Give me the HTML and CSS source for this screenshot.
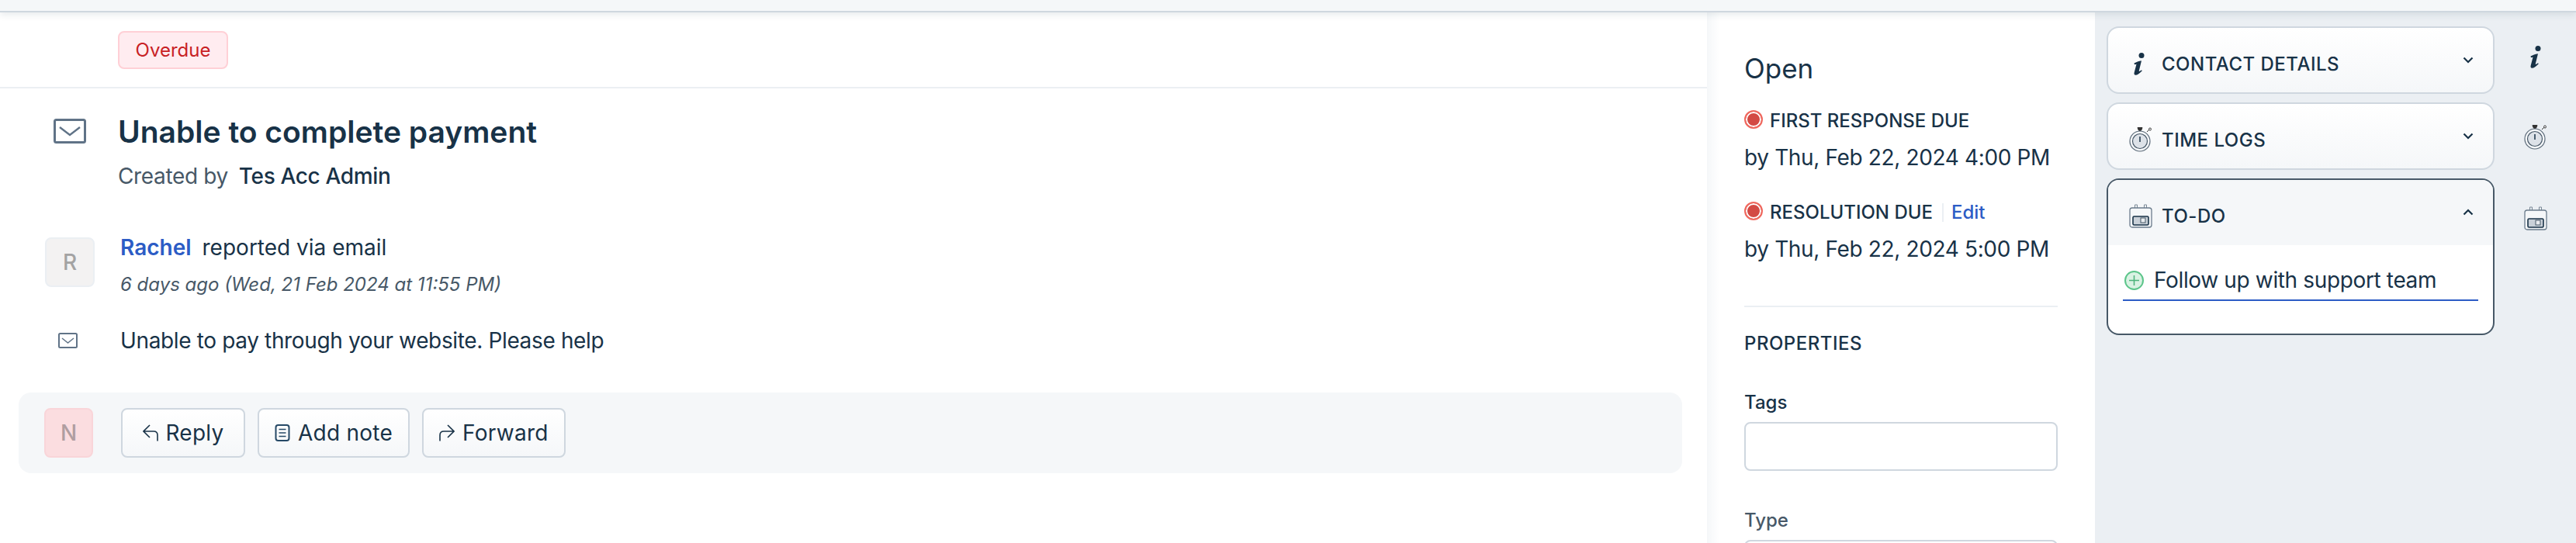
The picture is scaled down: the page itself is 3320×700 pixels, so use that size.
FILE: index.html
```html
<!DOCTYPE html>
<html lang="en">
<head>
<meta charset="utf-8">
<title>Unable to complete payment</title>
<link rel="stylesheet" href="styles.css">
</head>
<body>
<header class="topbar"></header>
<div class="layout">
  <main class="main">
    <div class="status-row"><span class="badge">Overdue</span></div>
    <section class="ticket-head">
      <svg class="mail-lg" viewBox="0 0 42 32"><rect x="1.500" y="1.500" width="39" height="29" rx="2" fill="#fff" stroke="#607387" stroke-width="3"/><path d="M8 11l13 10 13-10" fill="none" stroke="#607387" stroke-width="2.400"/></svg>
      <div>
        <h1 class="title">Unable to complete payment</h1>
        <p class="created">Created by<strong class="creator">Tes Acc Admin</strong></p>
      </div>
    </section>
    <section class="activity">
      <div class="avatar avatar-r">R</div>
      <div>
        <p class="reported"><a class="link-name">Rachel</a><span class="via">reported via email</span></p>
        <p class="when">6 days ago (Wed, 21 Feb 2024 at 11:55 PM)</p>
      </div>
    </section>
    <section class="message">
      <svg class="mail-sm" viewBox="0 0 25 20"><rect x="1" y="1" width="23" height="18" rx="1.500" fill="#fff" stroke="#607387" stroke-width="2"/><path d="M5 7l7.500 6 7.500-6" fill="none" stroke="#607387" stroke-width="1.500"/></svg>
      <p class="message-text">Unable to pay through your website. Please help</p>
    </section>
    <section class="reply-bar">
      <div class="avatar avatar-n">N</div>
      <button class="btn">
        <svg class="btn-icon" viewBox="0 0 20 22"><path d="M9 1L1 9l8 8M1 9h13q5 0 5 5v7.500" fill="none" stroke="#183247" stroke-width="1.600"/></svg>Reply
      </button>
      <button class="btn">
        <svg class="btn-icon" viewBox="0 0 20 22"><rect x="1.500" y="1" width="17" height="20" rx="3" fill="none" stroke="#264966" stroke-width="2"/><path d="M5.500 6.500h9M5.500 11h9M5.500 15.500h9" stroke="#264966" stroke-width="1.600"/></svg>Add note
      </button>
      <button class="btn">
        <svg class="btn-icon" viewBox="0 0 20 22"><path d="M11 1l8 8-8 8M19 9H6q-5 0-5 5v7.500" fill="none" stroke="#183247" stroke-width="1.600"/></svg>Forward
      </button>
    </section>
  </main>

  <aside class="panel">
    <h2 class="state">Open</h2>
    <div class="due-label due-first"><span class="dot"></span>FIRST RESPONSE DUE</div>
    <p class="due-date">by Thu, Feb 22, 2024 4:00 PM</p>
    <div class="due-label due-second"><span class="dot"></span>RESOLUTION DUE<span class="sep"></span><a class="edit">Edit</a></div>
    <p class="due-date">by Thu, Feb 22, 2024 5:00 PM</p>
    <hr class="rule">
    <h3 class="props">PROPERTIES</h3>
    <label class="field-label field-tags">Tags</label>
    <div class="input"></div>
    <label class="field-label field-type">Type</label>
    <div class="input"></div>
  </aside>

  <aside class="rail">
    <div class="cards">
      <div class="card">
        <div class="card-head">
          <span class="card-icon"><svg class="ico-i" viewBox="0 0 16 29"><circle cx="11" cy="3.500" r="3.500" fill="#183247"/><path d="M1.500 13.500C4.500 11.800 7 10.800 11 10.200L7.800 23.200C7.600 24.500 8.500 24 11 22.200L11.800 23.300C8 27 5.500 28.800 3.500 28.800C1.500 28.800 1.200 27 1.800 25L4.500 14.800L2 15.300Z" fill="#183247"/></svg></span>
          <span class="card-title">CONTACT DETAILS</span>
          <svg class="chev" viewBox="0 0 14 9"><path d="M1.500 1.500L7 7l5.500-5.500" fill="none" stroke="#183247" stroke-width="2.200"/></svg>
        </div>
      </div>
      <div class="card">
        <div class="card-head">
          <span class="card-icon"><svg class="ico-watch" viewBox="0 0 30 32"><path d="M11 .5h6l-1 3h-4zM13 3h2v3h-2zM23 6l3-3" fill="#333" stroke="#333" stroke-width="1"/><circle cx="27" cy="2.500" r="1.500" fill="#fff" stroke="#333"/><circle cx="14" cy="18" r="13" fill="#f5f7f9" stroke="#5d6c7a" stroke-width="1.200"/><circle cx="14" cy="18" r="9.500" fill="#dde2e8" stroke="#475867" stroke-width="1.200"/><path d="M14 12v7" stroke="#183247" stroke-width="1.500"/></svg></span>
          <span class="card-title">TIME LOGS</span>
          <svg class="chev" viewBox="0 0 14 9"><path d="M1.500 1.500L7 7l5.500-5.500" fill="none" stroke="#183247" stroke-width="2.200"/></svg>
        </div>
      </div>
      <div class="card card-open">
        <div class="card-head head-open">
          <span class="card-icon"><svg class="ico-cal" viewBox="0 0 30 31"><path d="M7.500 5V1h3v4M19.500 5V1h3v4" fill="none" stroke="#7a8896"/><rect x="1" y="5" width="28" height="25" rx="3" fill="#f5f7f9" stroke="#6b7c8c" stroke-width="1.300"/><rect x="5" y="16" width="20" height="11" rx="1.500" fill="#c9d0d8" stroke="#183247" stroke-width="1.600"/><rect x="15" y="18" width="6" height="6" fill="#e8ebef" stroke="#475867"/></svg></span>
          <span class="card-title">TO-DO</span>
          <svg class="chev" viewBox="0 0 14 9"><path d="M1.500 7.500L7 2l5.500 5.500" fill="none" stroke="#183247" stroke-width="2.200"/></svg>
        </div>
        <div class="card-body">
          <div class="todo">
            <svg class="plus" viewBox="0 0 25 25"><circle cx="12.500" cy="12.500" r="11.500" fill="#d9f2e3" stroke="#5cc58a" stroke-width="2"/><path d="M12.500 6v13M6 12.500h13" stroke="#4bb37a" stroke-width="1.500"/></svg>
            <span class="todo-text">Follow up with support team</span>
          </div>
        </div>
      </div>
    </div>
    <div class="rail-icons">
      <svg class="ico-i" viewBox="0 0 16 29"><circle cx="11" cy="3.500" r="3.500" fill="#183247"/><path d="M1.500 13.500C4.500 11.800 7 10.800 11 10.200L7.800 23.200C7.600 24.500 8.500 24 11 22.200L11.800 23.300C8 27 5.500 28.800 3.500 28.800C1.500 28.800 1.200 27 1.800 25L4.500 14.800L2 15.300Z" fill="#183247"/></svg>
      <svg class="ico-watch" viewBox="0 0 30 32"><path d="M11 .5h6l-1 3h-4zM13 3h2v3h-2zM23 6l3-3" fill="#333" stroke="#333" stroke-width="1"/><circle cx="27" cy="2.500" r="1.500" fill="#fff" stroke="#333"/><circle cx="14" cy="18" r="13" fill="#f5f7f9" stroke="#5d6c7a" stroke-width="1.200"/><circle cx="14" cy="18" r="9.500" fill="#dde2e8" stroke="#475867" stroke-width="1.200"/><path d="M14 12v7" stroke="#183247" stroke-width="1.500"/></svg>
      <svg class="ico-cal" viewBox="0 0 30 31"><path d="M7.500 5V1h3v4M19.500 5V1h3v4" fill="none" stroke="#7a8896"/><rect x="1" y="5" width="28" height="25" rx="3" fill="#f5f7f9" stroke="#6b7c8c" stroke-width="1.300"/><rect x="5" y="16" width="20" height="11" rx="1.500" fill="#c9d0d8" stroke="#183247" stroke-width="1.600"/><rect x="15" y="18" width="6" height="6" fill="#e8ebef" stroke="#475867"/></svg>
    </div>
  </aside>
</div>
</body>
</html>
```
FILE: styles.css
```css
* { box-sizing: border-box; }
html, body { margin: 0; height: 700px; overflow: hidden; }
body { font-family: Inter, "Noto Sans", sans-serif; color: #183247; background: #fff; font-size: 28px; display: flex; flex-direction: column; }
p, h1, h2, h3 { margin: 0; font-weight: 400; }
svg { display: block; flex: none; }

.topbar { height: 16px; flex: none; background: #f5f7f9; border-bottom: 2px solid #cfd7df; box-shadow: 0 3px 10px rgba(24, 50, 71, .10); position: relative; z-index: 2; }
.layout { flex: 1; display: flex; min-height: 0; }

.main { width: 2200px; flex: none; background: #fff; }
.status-row { padding: 24px 0 23px 152px; border-bottom: 2px solid #ebeff3; height: 98px; }
.badge { display: inline-flex; align-items: center; height: 49px; width: 142px; justify-content: center; background: #ffecf0; border: 2px solid #ffd0d6; border-radius: 8px; color: #c82124; font-size: 24px; }

.ticket-head { display: flex; padding: 32px 0 0 69px; gap: 41px; }
.mail-lg { width: 42px; height: 32px; margin-top: 7px; }
.title { font-size: 39px; line-height: 48px; font-weight: 600; }
.created { margin-top: 13px; line-height: 40px; color: #475867; letter-spacing: -.36px; }
.creator { font-weight: 500; color: #183247; margin-left: 14px; }

.activity { display: flex; margin-top: 52px; padding-left: 58px; gap: 33px; }
.avatar { width: 64px; height: 64px; border-radius: 8px; display: flex; align-items: center; justify-content: center; font-weight: 500; flex: none; }
.avatar-r { margin-top: 7px; background: #f3f2f2; border: 2px solid #ebeff3; color: #a3a3a3; }
.reported { line-height: 40px; }
.link-name { color: #2c5cc5; font-weight: 600; }
.via { margin-left: 14px; }
.when { margin-top: 12px; font-size: 24px; line-height: 32px; font-style: italic; color: #475867; }

.message { display: flex; align-items: center; margin-top: 36px; padding-left: 75px; gap: 55px; }
.mail-sm { width: 25px; height: 20px; }
.message-text { line-height: 40px; letter-spacing: -.36px; }

.reply-bar { display: flex; align-items: center; gap: 16px; margin: 47px 0 0 24px; width: 2144px; height: 104px; padding-left: 33px; background: #f5f7f9; border-radius: 16px; }
.avatar-n { width: 63px; margin-right: 20px; background: #fbdde0; border: 2px solid #f9d5d9; color: #b09ea1; }
.btn { display: flex; align-items: center; justify-content: center; gap: 10px; min-width: 160px; height: 64px; padding: 0 20px; background: linear-gradient(#fff, #f5f7f9); border: 2px solid #cfd7df; border-radius: 8px; font: 400 28px Inter, "Noto Sans", sans-serif; letter-spacing: .25px; color: #183247; }
.btn-icon { width: 20px; height: 22px; }

.panel { width: 500px; flex: none; padding: 48px 48px 0; background: linear-gradient(90deg, #f5f7f9, #fff 16px); overflow: hidden; }
.state { font-size: 35px; line-height: 48px; }
.due-label { display: flex; align-items: center; font-size: 24px; line-height: 32px; font-weight: 500; }
.due-first { margin-top: 28px; }
.due-second { margin-top: 35px; }
.dot { width: 24px; height: 24px; border-radius: 50%; background: #d34a44; border: 2px solid #f06a60; box-shadow: inset 0 0 0 2px #fff; margin: -4px 9px 0 0; flex: none; }
.sep { width: 2px; height: 24px; background: #ebeff3; margin: 0 10px 0 12px; }
.edit { color: #2c5cc5; }
.due-date { margin-top: 11px; line-height: 40px; letter-spacing: -.36px; }
.rule { border: 0; border-top: 2px solid #ebeff3; margin: 53px 0 0; }
.props { margin-top: 31px; font-size: 24px; line-height: 32px; font-weight: 500; letter-spacing: .5px; }
.field-label { display: block; font-size: 24px; line-height: 32px; font-weight: 500; }
.field-tags { margin-top: 44px; }
.field-type { margin-top: 48px; color: #475867; }
.input { height: 63px; margin-top: 9px; border: 2px solid #cfd7df; border-radius: 8px; background: #fff; }

.rail { flex: 1; display: flex; padding: 18px 0 0 15px; background: #ebeff3; }
.cards { width: 500px; flex: none; display: flex; flex-direction: column; gap: 11px; }
.card { height: 87px; border: 2px solid #cfd7df; border-radius: 16px; background: linear-gradient(#fff, #f5f7f9); overflow: hidden; }
.card-open { height: 202px; border-color: #475867; background: #fff; }
.card-head { display: flex; align-items: flex-start; padding: 30px 27px 0; }
.head-open { height: 84px; background: #f5f7f9; }
.card-icon { width: 42px; height: 32px; display: flex; align-items: center; justify-content: flex-start; flex: none; }
.card-icon .ico-i { margin-left: 5px; }
.card-title { flex: 1; font-size: 24px; line-height: 32px; font-weight: 500; letter-spacing: .5px; padding-top: 1px; }
.chev { width: 14px; height: 9px; margin: 7px -2px 0 0; }
.card-body { padding: 26px 19px 0; }
.todo { display: flex; align-items: center; gap: 13px; height: 46px; padding: 0 2px 6px; border-bottom: 2px solid #2c5cc5; line-height: 40px; }
.todo-text { letter-spacing: -.36px; }
.plus { width: 25px; height: 25px; }

.rail-icons { flex: 1; display: flex; flex-direction: column; align-items: center; padding-top: 25px; }
.ico-i { width: 16px; height: 29px; }
.ico-watch { width: 30px; height: 32px; }
.ico-cal { width: 30px; height: 31px; }
.rail-icons .ico-watch { margin-top: 73px; }
.rail-icons .ico-cal { margin-top: 73px; }
```
